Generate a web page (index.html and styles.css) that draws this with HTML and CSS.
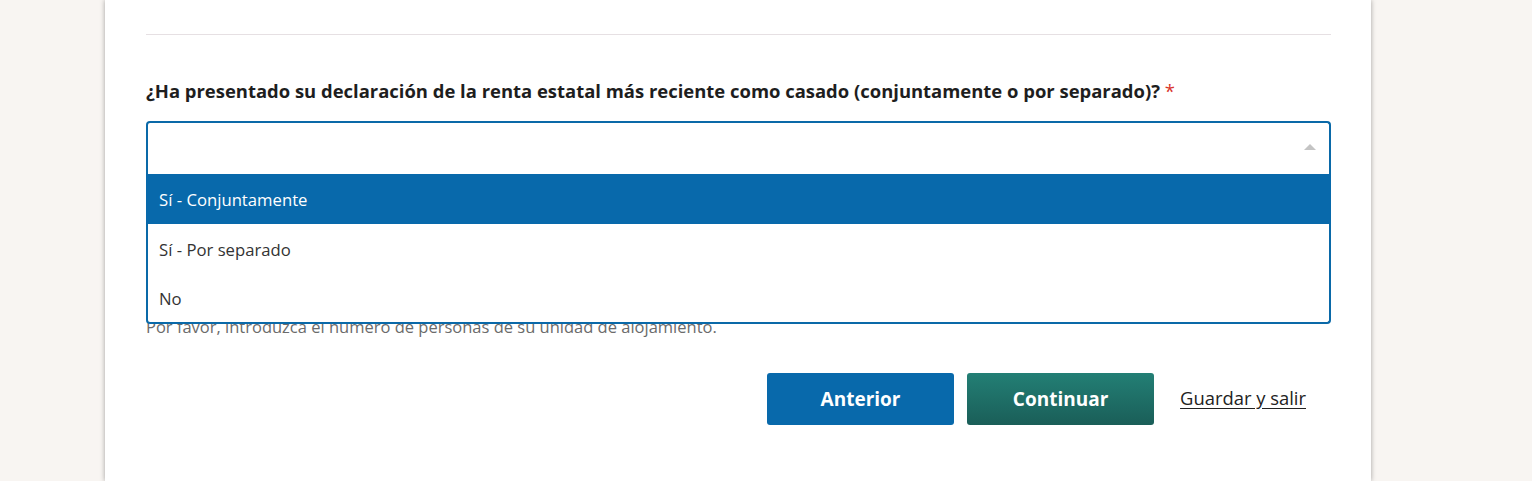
FILE: index.html
```html
<!DOCTYPE html>
<html lang="es">
<head>
<meta charset="utf-8">
<title>Formulario</title>
<link rel="stylesheet" href="styles.css">
</head>
<body>
<main class="card">
  <hr class="sep">
  <div class="field">
    <label class="q-label">¿Ha presentado su declaración de la renta estatal más reciente como casado (conjuntamente o por separado)? <span class="req">*</span></label>
    <div class="combo">
      <div class="control"><span class="arrow"></span></div>
      <ul class="listbox">
        <li class="opt active">Sí - Conjuntamente</li>
        <li class="opt">Sí - Por separado</li>
        <li class="opt last">No</li>
      </ul>
    </div>
  </div>
  <p class="hint">Por favor, introduzca el número de personas de su unidad de alojamiento.</p>
  <div class="actions">
    <button class="btn btn-prev">Anterior</button>
    <button class="btn btn-next">Continuar</button>
    <a class="link" href="#">Guardar y salir</a>
  </div>
</main>
</body>
</html>
```
FILE: styles.css
```css
html, body { margin: 0; padding: 0; }
body {
  background: #f8f5f2;
  font-family: "Open Sans", "Noto Sans", sans-serif;
  color: #222;
  height: 481px;
  overflow: hidden;
}
.card {
  margin-left: 105px;
  width: 1266px;
  box-sizing: border-box;
  height: 481px;
  background: #fff;
  box-shadow: 0 0 5px rgba(0,0,0,0.35);
  padding: 34px 40px 0 41px;
}
.sep {
  margin: 0;
  border: 0;
  border-top: 1px solid #e6e0e3;
}
.field { margin-top: 44px; }
.q-label {
  display: block;
  font-weight: 700;
  font-size: 18.45px;
  line-height: 24px;
  color: #1e1e1e;
  margin-bottom: 18px;
}
.req { color: #d9342b; font-weight: 400; }
.combo { position: relative; }
.control {
  height: 51px;
  border: 2px solid #0a69a8;
  border-bottom: 0;
  border-radius: 4px 4px 0 0;
  position: relative;
}
.arrow {
  position: absolute;
  right: 13px;
  top: 21px;
  width: 0; height: 0;
  border-left: 6px solid transparent;
  border-right: 6px solid transparent;
  border-bottom: 6px solid #c4c4c4;
}
.listbox {
  position: absolute;
  left: 0; right: 0; top: 100%;
  margin: 0; padding: 0;
  list-style: none;
  background: #fff;
  border: 2px solid #0a69a8;
  border-top: 0;
  border-radius: 0 0 4px 4px;
  z-index: 2;
}
.opt {
  height: 50px;
  line-height: 51px;
  padding-left: 11px;
  font-size: 16.7px;
  color: #333;
}
.opt.active {
  background: #0869ab;
  color: #fff;
  margin: 0 -2px;
  padding-left: 13px;
}
.opt.last { height: 48px; line-height: 49px; }
.hint {
  margin: 143px 0 0;
  font-size: 16.5px;
  line-height: 20px;
  color: #6b6b6b;
}
.actions {
  display: flex;
  justify-content: flex-end;
  align-items: center;
  margin-top: 36px;
  padding-right: 25px;
}
.btn {
  width: 187px;
  height: 52px;
  border: 0;
  border-radius: 3px;
  color: #fff;
  font-family: inherit;
  font-weight: 700;
  font-size: 19px;
  cursor: pointer;
}
.btn-prev { background: #0869ab; }
.btn-next {
  margin-left: 13px;
  background: linear-gradient(#237f75, #1a5e58);
}
.link {
  margin-left: 26px;
  margin-bottom: 4px;
  font-size: 18.4px;
  color: #222;
  text-decoration: underline;
  text-underline-offset: 3px;
}
```
